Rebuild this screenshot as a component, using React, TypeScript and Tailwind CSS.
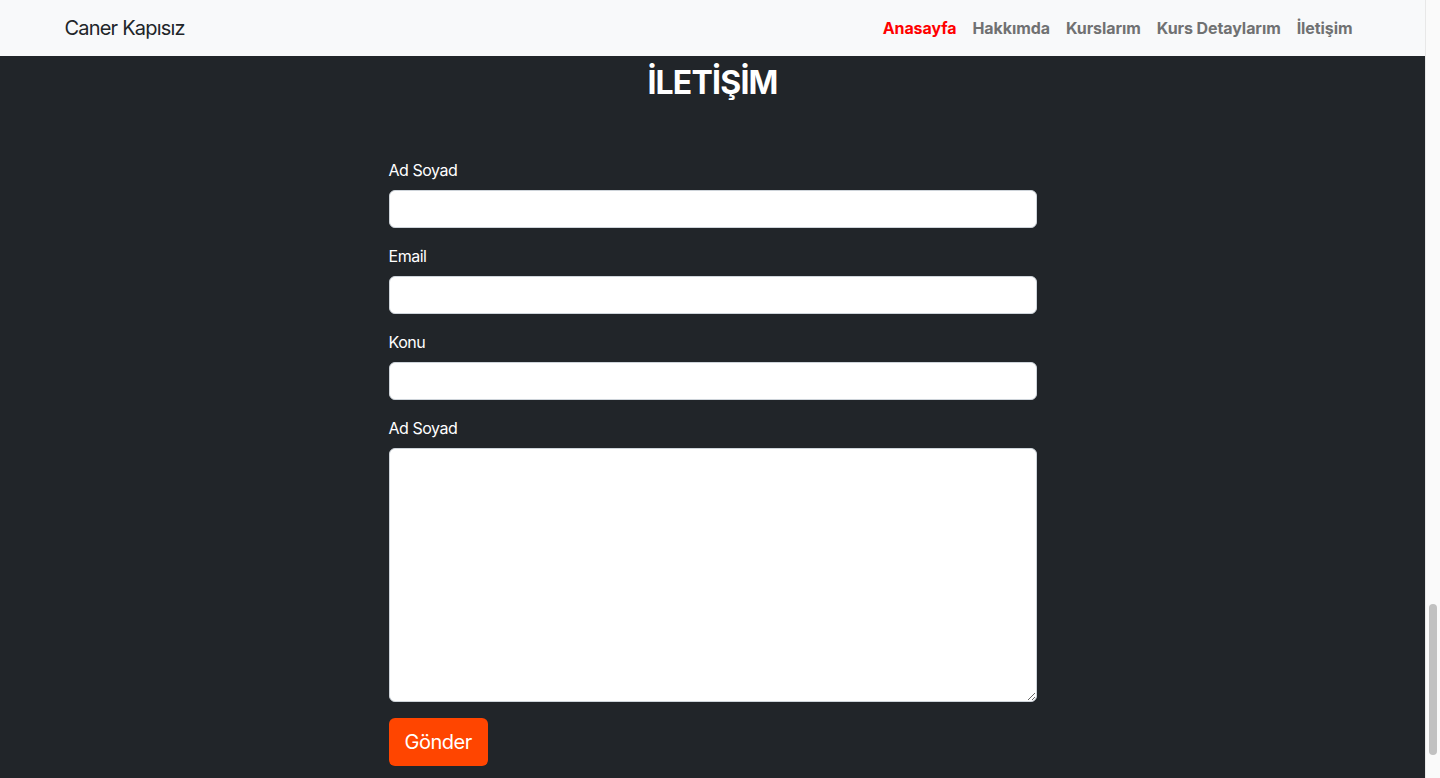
const navItems = [
  { label: "Anasayfa", active: true },
  { label: "Hakkımda" },
  { label: "Kurslarım" },
  { label: "Kurs Detaylarım" },
  { label: "İletişim" },
];

const fields = ["Ad Soyad", "Email", "Konu"];

function Navbar() {
  return (
    <nav className="h-14 bg-[#f8f9fa]">
      <div className="mx-auto flex h-full max-w-[1320px] items-center justify-between px-3">
        <a className="text-[20px] tracking-[-0.04em] text-[#212529]">Caner Kapısız</a>
        <ul className="flex items-center">
          {navItems.map((item) => (
            <li key={item.label}>
              <a
                className={
                  item.active
                    ? "px-2 text-base font-bold tracking-[-0.005em] text-[#ff0000]"
                    : "px-2 text-base font-bold tracking-[-0.005em] text-[#707172]"
                }
              >
                {item.label}
              </a>
            </li>
          ))}
        </ul>
      </div>
    </nav>
  );
}

function ContactForm() {
  return (
    <form className="mx-auto w-[648px] tracking-[-0.03em]">
      {fields.map((label) => (
        <div key={label} className="mb-4">
          <label className="mb-2 block text-base leading-6 text-white">{label}</label>
          <input
            type="text"
            className="block h-[38px] w-full rounded-md border border-[#ced4da] bg-white px-3"
          />
        </div>
      ))}
      <div className="mb-4">
        <label className="mb-2 block text-base leading-6 text-white">Ad Soyad</label>
        <textarea className="block h-[254px] w-full rounded-md border border-[#ced4da] bg-white px-3 py-1.5" />
      </div>
      <button
        type="button"
        className="h-12 rounded-md bg-[#ff4500] px-4 text-[20px] tracking-[-0.025em] text-white"
      >
        Gönder
      </button>
    </form>
  );
}

export default function App() {
  return (
    <div className="flex h-[778px] overflow-hidden bg-[#212529] font-['Inter',sans-serif]">
      <div className="flex-1">
        <Navbar />
        <main>
          <h1 className="mt-2 text-center text-[32px] font-bold leading-[1.2] tracking-[-0.025em] text-white">
            İLETİŞİM
          </h1>
          <div className="pt-14">
            <ContactForm />
          </div>
        </main>
      </div>
      <div className="w-[15px] border-l border-[#e8e8e8] bg-[#fafafa] pt-[604px]">
        <div className="ml-[3px] h-[151px] w-2 rounded-full bg-[#c1c1c1]" />
      </div>
    </div>
  );
}
